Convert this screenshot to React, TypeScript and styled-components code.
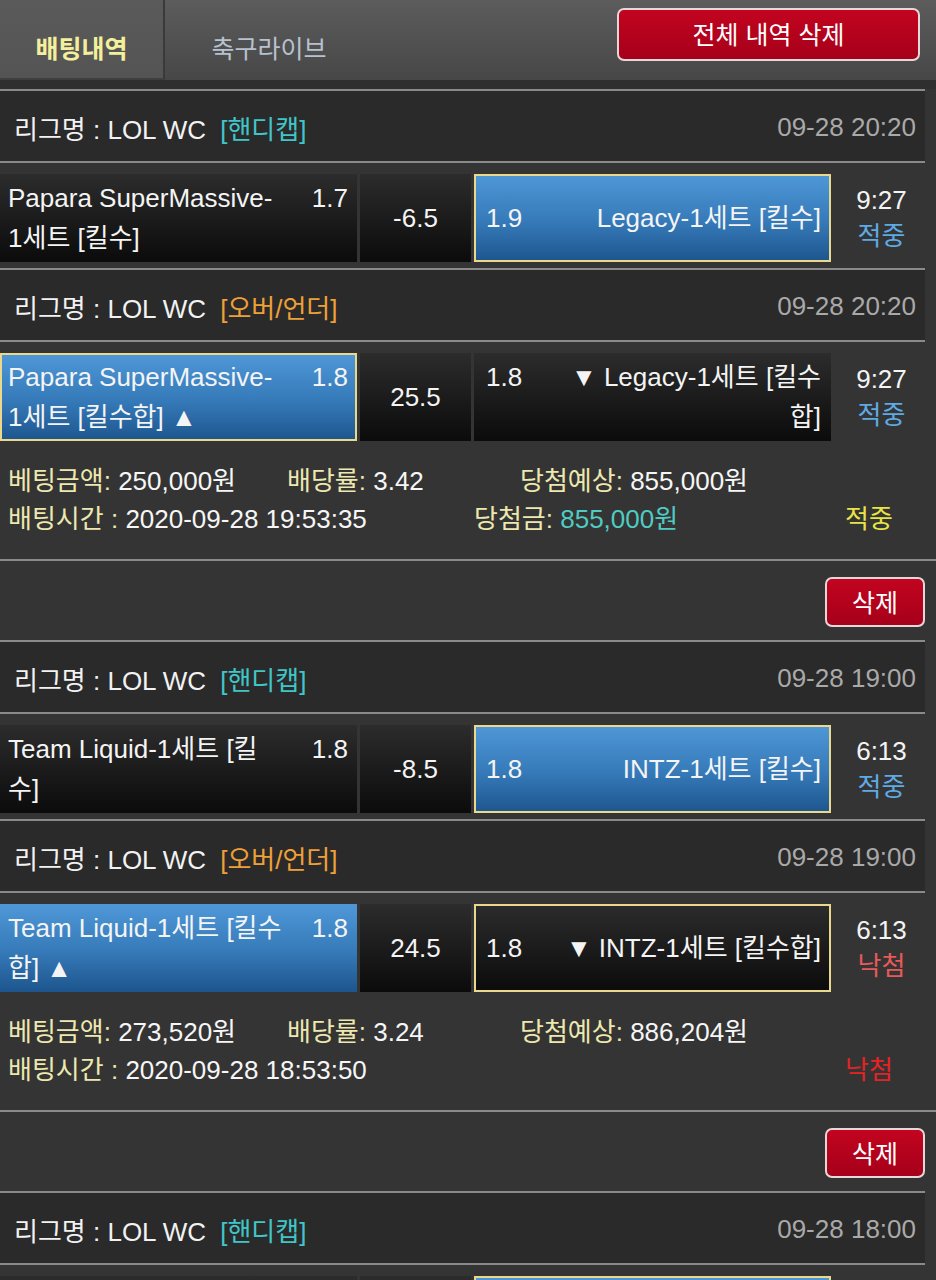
import React from "react";
import styled, { createGlobalStyle } from "styled-components";

const GlobalStyle = createGlobalStyle`
  * { box-sizing: border-box; }
  html, body {
    margin: 0;
    padding: 0;
    background: #343434;
  }
  body {
    font-family: "Liberation Sans", "Noto Sans CJK KR", sans-serif;
    color: #f4f4f4;
  }
`;

const Page = styled.div`
  width: 936px;
  background: #343434;
  font-size: 26px;
`;

const TopBar = styled.div`
  height: 89px;
  display: flex;
  align-items: flex-start;
  background: linear-gradient(#5c5c5c, #474747);
  border-bottom: 9px solid #2f2f2f;
`;

const Tab = styled.div<{ $active?: boolean }>`
  height: 80px;
  width: ${p => (p.$active ? "165px" : "208px")};
  display: flex;
  justify-content: center;
  padding-top: 37px;
  font-size: 25px;
  line-height: 1;
  font-weight: ${p => (p.$active ? "bold" : "normal")};
  color: ${p => (p.$active ? "#f3ef9c" : "#b8c2cf")};
  background: ${p => (p.$active ? "linear-gradient(#5a5a5a, #545454)" : "transparent")};
  border-right: ${p => (p.$active ? "2px solid #3a3a3a" : "none")};
  border-bottom: ${p => (p.$active ? "2px solid #3e3e3e" : "none")};
`;

const ClearAll = styled.button`
  margin: 8px 16px 0 auto;
  width: 303px;
  height: 53px;
  border: 2px solid #e7d7d9;
  border-radius: 7px;
  background: linear-gradient(#c2041f, #a6001a);
  color: #fff;
  font-family: inherit;
  font-size: 25px;
  padding: 0 0 4px;
`;

const League = styled.div`
  width: 925px;
  height: 74px;
  display: flex;
  align-items: center;
  justify-content: space-between;
  padding: 2px 9px 0 14px;
  background: #2a2a2a;
  border-top: 2px solid #8a8a8a;
  border-bottom: 2px solid #8a8a8a;
`;

const LeagueName = styled.div`
  color: #f2f2f2;
`;

const BetType = styled.span<{ $color: string }>`
  margin-left: 14px;
  color: ${p => p.$color};
`;

const MatchDate = styled.div`
  color: #a9a9a9;
`;

const MatchRow = styled.div<{ $last?: boolean }>`
  width: 925px;
  display: grid;
  grid-template-columns: 357px 111px 357px 1fr;
  column-gap: 3px;
  padding-top: 11px;
  margin-bottom: ${p => (p.$last ? "0" : "6px")};
`;

const Cell = styled.div<{ $win?: boolean; $picked?: boolean }>`
  height: 88px;
  display: flex;
  align-items: center;
  background: ${p =>
    p.$win
      ? "linear-gradient(#4f98d8, #3579b8 55%, #1d558d)"
      : "linear-gradient(#2c2c2c, #0b0b0b)"};
  box-shadow: ${p => (p.$picked ? "inset 0 0 0 2px #ead98c" : "none")};
`;

const CellInner = styled.div<{ $away?: boolean }>`
  width: 100%;
  display: flex;
  flex-direction: ${p => (p.$away ? "row-reverse" : "row")};
  align-items: flex-start;
  padding: ${p => (p.$away ? "0 10px 0 12px" : "0 9px 0 8px")};
  line-height: 40px;
`;

const TeamName = styled.div<{ $away?: boolean }>`
  flex: 1;
  text-align: ${p => (p.$away ? "right" : "left")};
  white-space: nowrap;
`;

const Odds = styled.div`
  white-space: nowrap;
`;

const LineCell = styled(Cell)`
  justify-content: center;
`;

const TimeCol = styled.div`
  display: flex;
  flex-direction: column;
  align-items: center;
  justify-content: center;
  line-height: 36px;
  padding-left: 4px;
`;

const Status = styled.div<{ $color: string }>`
  color: ${p => p.$color};
`;

const Info = styled.div`
  width: 936px;
  padding: 18px 8px 24px;
  border-bottom: 2px solid #8a8a8a;
`;

const InfoRow = styled.div`
  display: flex;
  align-items: center;
  height: 38px;
  white-space: nowrap;
`;

const InfoCell = styled.div<{ $w?: number }>`
  width: ${p => (p.$w ? `${p.$w}px` : "auto")};
`;

const Label = styled.span`
  color: #ede8af;
`;

const Value = styled.span<{ $color?: string }>`
  color: ${p => p.$color || "#f6f6f6"};
`;

const DeleteBar = styled.div`
  height: 79px;
  display: flex;
  justify-content: flex-end;
  align-items: flex-start;
  padding: 16px 11px 0 0;
`;

const DeleteButton = styled.button`
  width: 100px;
  height: 50px;
  border: 2px solid #e7d7d9;
  border-radius: 7px;
  background: linear-gradient(#c2041f, #a6001a);
  color: #fff;
  font-family: inherit;
  font-size: 25px;
  padding: 0 0 3px;
`;

type Match = {
  type: string;
  date: string;
  home: string[];
  homeOdds: string;
  line: string;
  away: string[];
  awayOdds: string;
  win: "home" | "away";
  pick: "home" | "away";
  time: string;
  result: string;
};

type Bet = {
  matches: Match[];
  amount: string;
  rate: string;
  expected: string;
  betTime: string;
  prize?: string;
  status: string;
};

const typeColor: Record<string, string> = {
  "핸디캡": "#40c6c8",
  "오버/언더": "#eea038",
};

const resultColor: Record<string, string> = {
  "적중": "#5eaae4",
  "낙첨": "#e65a5a",
};

const statusColor: Record<string, string> = {
  "적중": "#e9e445",
  "낙첨": "#e42424",
};

const bets: Bet[] = [
  {
    matches: [
      {
        type: "핸디캡", date: "09-28 20:20",
        home: ["Papara SuperMassive-", "1세트 [킬수]"], homeOdds: "1.7", line: "-6.5",
        away: ["Legacy-1세트 [킬수]"], awayOdds: "1.9",
        win: "away", pick: "away", time: "9:27", result: "적중",
      },
      {
        type: "오버/언더", date: "09-28 20:20",
        home: ["Papara SuperMassive-", "1세트 [킬수합] ▲"], homeOdds: "1.8", line: "25.5",
        away: ["▼ Legacy-1세트 [킬수", "합]"], awayOdds: "1.8",
        win: "home", pick: "home", time: "9:27", result: "적중",
      },
    ],
    amount: "250,000원", rate: "3.42", expected: "855,000원",
    betTime: "2020-09-28 19:53:35", prize: "855,000원", status: "적중",
  },
  {
    matches: [
      {
        type: "핸디캡", date: "09-28 19:00",
        home: ["Team Liquid-1세트 [킬", "수]"], homeOdds: "1.8", line: "-8.5",
        away: ["INTZ-1세트 [킬수]"], awayOdds: "1.8",
        win: "away", pick: "away", time: "6:13", result: "적중",
      },
      {
        type: "오버/언더", date: "09-28 19:00",
        home: ["Team Liquid-1세트 [킬수", "합] ▲"], homeOdds: "1.8", line: "24.5",
        away: ["▼ INTZ-1세트 [킬수합]"], awayOdds: "1.8",
        win: "home", pick: "away", time: "6:13", result: "낙첨",
      },
    ],
    amount: "273,520원", rate: "3.24", expected: "886,204원",
    betTime: "2020-09-28 18:53:50", status: "낙첨",
  },
  {
    matches: [
      {
        type: "핸디캡", date: "09-28 18:00",
        home: ["Fnatic-1세트 [킬수]"], homeOdds: "1.8", line: "-4.5",
        away: ["MAD Lions-1세트 [킬수]"], awayOdds: "1.8",
        win: "away", pick: "away", time: "5:40", result: "적중",
      },
    ],
    amount: "100,000원", rate: "1.80", expected: "180,000원",
    betTime: "2020-09-28 17:41:12", prize: "180,000원", status: "적중",
  },
];

function Lines({ lines }: { lines: string[] }) {
  return (
    <>
      {lines.map((l, i) => (
        <div key={i}>{l}</div>
      ))}
    </>
  );
}

function MatchBlock({ m, last }: { m: Match; last: boolean }) {
  return (
    <>
      <League>
        <LeagueName>
          리그명 : LOL WC<BetType $color={typeColor[m.type]}>[{m.type}]</BetType>
        </LeagueName>
        <MatchDate>{m.date}</MatchDate>
      </League>
      <MatchRow $last={last}>
        <Cell $win={m.win === "home"} $picked={m.pick === "home"}>
          <CellInner>
            <TeamName><Lines lines={m.home} /></TeamName>
            <Odds>{m.homeOdds}</Odds>
          </CellInner>
        </Cell>
        <LineCell>{m.line}</LineCell>
        <Cell $win={m.win === "away"} $picked={m.pick === "away"}>
          <CellInner $away>
            <TeamName $away><Lines lines={m.away} /></TeamName>
            <Odds>{m.awayOdds}</Odds>
          </CellInner>
        </Cell>
        <TimeCol>
          <div>{m.time}</div>
          <Status $color={resultColor[m.result]}>{m.result}</Status>
        </TimeCol>
      </MatchRow>
    </>
  );
}

function BetBlock({ bet }: { bet: Bet }) {
  return (
    <>
      {bet.matches.map((m, i) => (
        <MatchBlock key={i} m={m} last={i === bet.matches.length - 1} />
      ))}
      <Info>
        <InfoRow>
          <InfoCell $w={279}>
            <Label>베팅금액:</Label> <Value>{bet.amount}</Value>
          </InfoCell>
          <InfoCell $w={233}>
            <Label>배당률:</Label> <Value>{bet.rate}</Value>
          </InfoCell>
          <InfoCell>
            <Label>당첨예상:</Label> <Value>{bet.expected}</Value>
          </InfoCell>
        </InfoRow>
        <InfoRow>
          <InfoCell $w={466}>
            <Label>배팅시간 :</Label> <Value>{bet.betTime}</Value>
          </InfoCell>
          <InfoCell $w={371}>
            {bet.prize && (
              <>
                <Label>당첨금:</Label> <Value $color="#4fcbc3">{bet.prize}</Value>
              </>
            )}
          </InfoCell>
          <InfoCell>
            <Value $color={statusColor[bet.status]}>{bet.status}</Value>
          </InfoCell>
        </InfoRow>
      </Info>
      <DeleteBar>
        <DeleteButton>삭제</DeleteButton>
      </DeleteBar>
    </>
  );
}

export default function App() {
  return (
    <Page>
      <GlobalStyle />
      <TopBar>
        <Tab $active>배팅내역</Tab>
        <Tab>축구라이브</Tab>
        <ClearAll>전체 내역 삭제</ClearAll>
      </TopBar>
      {bets.map((b, i) => (
        <BetBlock key={i} bet={b} />
      ))}
    </Page>
  );
}
